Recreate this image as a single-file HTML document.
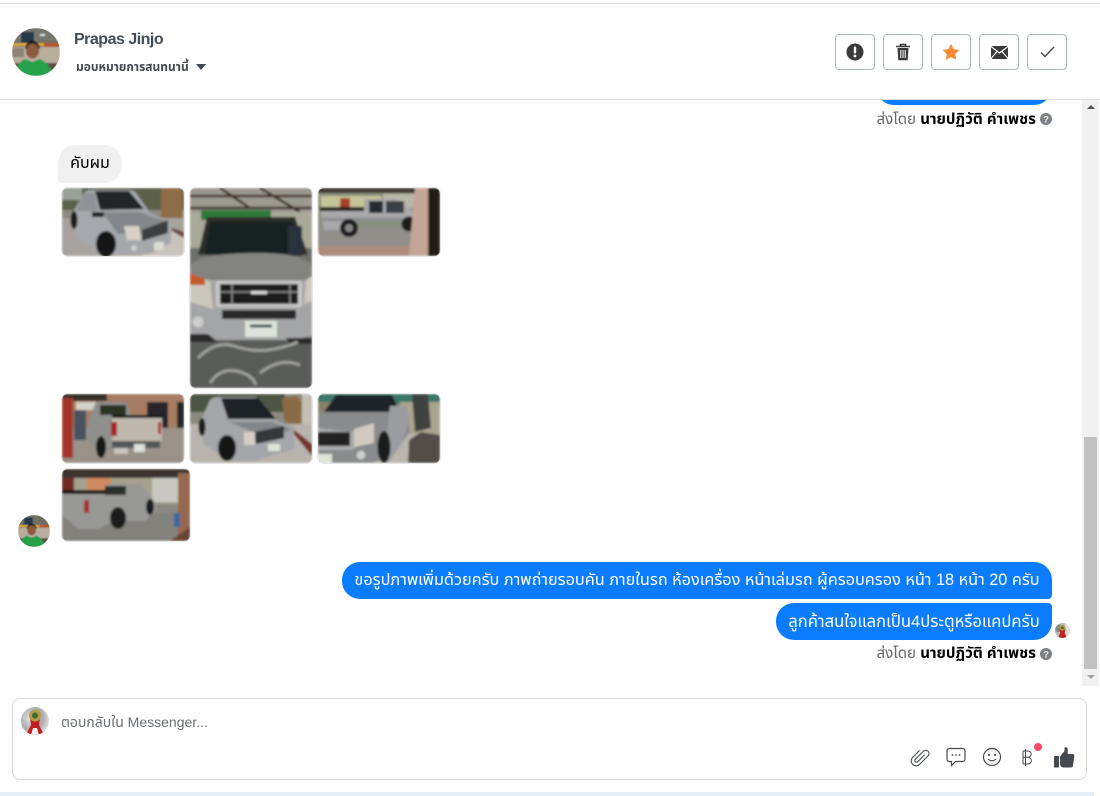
<!DOCTYPE html>
<html lang="th"><head><meta charset="utf-8"><title>Prapas Jinjo</title>
<style>
html,body{margin:0;padding:0;width:1100px;height:796px;overflow:hidden;background:#fff;font-family:"Liberation Sans","Noto Sans Thai","DejaVu Sans","Noto Sans CJK SC",sans-serif;color:#000}
.a{position:absolute}
.t{position:absolute;white-space:nowrap}
.btn{position:absolute;top:34px;width:38px;height:34px;border:1px solid #a9b4c0;border-radius:4px;background:#fff;display:flex;align-items:center;justify-content:center}
.img{position:absolute;border-radius:6px;overflow:hidden;box-shadow:0 0 0 1px #e4e4e4}
.img svg{display:block}
.bub{position:absolute;background:#0a7cff;color:#fff;line-height:37px;text-align:center;white-space:nowrap}
.sent{position:absolute;font-size:15.100px;color:#65676b;white-space:nowrap;text-align:right}
.sent b{color:#000}
</style></head>
<body>
<svg width="0" height="0" style="position:absolute"><defs>
<filter id="b" x="-5%" y="-5%" width="110%" height="110%"><feGaussianBlur stdDeviation="1"/></filter>
<filter id="s" x="-5%" y="-5%" width="110%" height="110%"><feGaussianBlur stdDeviation=".8"/></filter>
<clipPath id="c48"><circle cx="24" cy="24" r="24"/></clipPath>
<clipPath id="c28"><circle cx="14" cy="14" r="14"/></clipPath>
</defs></svg>

<div class="a" style="left:0;top:3px;width:1100px;height:1px;background:#dfdfdf"></div>
<div class="a" style="left:0;top:99px;width:1100px;height:1px;background:#dfdfdf"></div>

<svg class="a" style="left:12px;top:28px" width="48" height="48" viewBox="0 0 48 48"><g clip-path="url(#c48)"><g filter="url(#s)"><rect width="48" height="48" fill="#6f6d64"/><rect width="48" height="13" fill="#77766d"/><rect x="9" y="4" width="13" height="11" fill="#27384e"/><rect x="28" y="6" width="5" height="2" fill="#ddd"/><rect y="15" width="48" height="3" fill="#d7a640"/><rect x="32" y="15" width="16" height="4" fill="#b8552c"/><rect y="19" width="48" height="16" fill="#b9ad9d"/><rect y="20" x="0" width="12" height="9" fill="#8d8478"/><rect y="35" width="48" height="13" fill="#5f5145"/><path d="M14 17q6-9 13 0l1 4H13z" fill="#1b1b1b"/><ellipse cx="20.500" cy="23" rx="6.500" ry="7.500" fill="#8c5a3c"/><path d="M3 48q1-13 10-17l7 3 8-3q9 4 14 17z" fill="#27a04c"/></g></g></svg>
<div class="t" style="left:74px;top:30px;font-size:16px;letter-spacing:-.5px;font-weight:700;color:#444c56;line-height:20px">Prapas Jinjo</div>
<div class="t" style="left:76px;top:58px;font-size:12px;font-weight:700;color:#444950;line-height:18px">มอบหมายการสนทนานี้</div>
<div class="a" style="left:196px;top:64px;width:0;height:0;border-left:5.500px solid transparent;border-right:5.500px solid transparent;border-top:6px solid #444950"></div>

<div class="btn" style="left:835px"><svg width="18" height="18" viewBox="0 0 18 18"><circle cx="9" cy="9" r="8.500" fill="#3a3a3a"/><rect x="7.800" y="3.500" width="2.400" height="7" rx="1" fill="#fff"/><circle cx="9" cy="13" r="1.400" fill="#fff"/></svg></div>
<div class="btn" style="left:883px"><svg width="16" height="18" viewBox="0 0 16 18"><path d="M1 3.500h14M5.500 3V1.500h5V3" fill="none" stroke="#3a3a3a" stroke-width="1.600"/><path d="M2.500 5h11l-.8 12.200H3.300z" fill="#3a3a3a"/><path d="M5.800 7v8M8 7v8M10.200 7v8" stroke="#fff" stroke-width="1"/></svg></div>
<div class="btn" style="left:931px"><svg width="18" height="18" viewBox="0 0 18 18"><path d="M9 .8l2.600 5.300 5.800.8-4.200 4.100 1 5.800L9 14.100 3.800 16.800l1-5.800L.6 6.900l5.800-.8z" fill="#f98c34"/></svg></div>
<div class="btn" style="left:979px"><svg width="17" height="13" viewBox="0 0 17 13"><rect width="17" height="13" rx="1.500" fill="#3a3a3a"/><path d="M0 .5l8.500 6.500L17 .5M0 12.500l6-7M17 12.500l-6-7" fill="none" stroke="#fff" stroke-width="1.200"/></svg></div>
<div class="btn" style="left:1027px"><svg width="15" height="12" viewBox="0 0 15 12"><path d="M1 6.500l4 4L14 1" fill="none" stroke="#444" stroke-width="1.400"/></svg></div>

<div class="a" style="left:1082px;top:100px;width:17px;height:586px;background:#f1f1f1"></div>
<div class="a" style="left:1084px;top:437px;width:13px;height:232px;background:#c1c1c1"></div>
<div class="a" style="left:1087px;top:105px;width:0;height:0;border-left:4px solid transparent;border-right:4px solid transparent;border-bottom:4px solid #505050"></div>
<div class="a" style="left:1087px;top:675px;width:0;height:0;border-left:4px solid transparent;border-right:4px solid transparent;border-top:4px solid #a3a3a3"></div>

<div class="a" style="left:876px;top:100px;width:176px;height:5px;overflow:hidden"><div style="position:absolute;left:0;top:-37px;width:176px;height:42px;background:#0a7cff;border-radius:18px"></div></div>
<div class="sent" style="right:64px;top:111px;line-height:18px">ส่งโดย <b>นายปฏิวัติ คำเพชร</b></div>
<svg class="a" style="left:1040px;top:113px" width="12" height="12" viewBox="0 0 12 12"><circle cx="6" cy="6" r="6" fill="#7d8085"/><text x="6" y="9.500" font-size="9.500" font-weight="700" text-anchor="middle" fill="#fff" font-family="Liberation Sans">?</text></svg>

<div class="a" style="left:58px;top:145px;width:64px;height:38px;background:#f0f0f0;border-radius:18px 18px 18px 4px;font-size:16px;line-height:38px;text-align:center">คับผม</div>

<!-- photos -->
<div class="img" style="left:62px;top:188px;width:122px;height:68px"><svg width="122" height="68" viewBox="0 0 122 68"><g filter="url(#b)"><rect width="122" height="68" fill="#8a8a7e"/><rect width="122" height="22" fill="#5b604c"/><rect x="0" y="0" width="20" height="12" fill="#9aa296"/><rect x="99" y="0" width="21" height="36" fill="#8e6c45"/><rect y="30" width="122" height="38" fill="#a7a29b"/><path d="M88 34l34 12v22H80z" fill="#c8c3bb"/><path d="M98 36l24 14v-6z" fill="#6a4a48"/><path d="M11 24L22 5q2-3 8-3h36q6 0 8 3l14 20 22 10 -1 20-22 11H38L14 50z" fill="#a5a8ac"/><path d="M33 3h34l15 18-44 1z" fill="#202528"/><path d="M22 5l10 0 4 18H14z" fill="#8f9296"/><path d="M40 24h38l28 10-22 12H56z" fill="#83878b"/><path d="M80 42l26-10v13l-26 8z" fill="#3c3f42"/><path d="M62 38l15 0 2 14-14 0z" fill="#d6d2c6"/><path d="M55 52l28 2 24-8 1 6-18 13H56z" fill="#a5a7aa"/><circle cx="72" cy="60" r="3" fill="#cfcfcd"/><rect x="92" y="54" width="10" height="8" fill="#d9ddd2"/><ellipse cx="44" cy="56" rx="10" ry="13" fill="#171717"/><ellipse cx="12" cy="32" rx="3.500" ry="9" fill="#1f1f1f"/><rect x="30" y="24" width="12" height="5" fill="#1f2326"/></g></svg></div>

<div class="img" style="left:190px;top:188px;width:122px;height:200px"><svg width="122" height="200" viewBox="0 0 122 200"><g filter="url(#b)"><rect width="122" height="200" fill="#6e6f6c"/><rect width="122" height="24" fill="#9c9a90"/><path d="M0 8h122M0 20h122M30 0l30 20M70 0l40 24" stroke="#3f332a" stroke-width="2.500"/><rect y="24" width="122" height="36" fill="#a8a998"/><rect x="11" y="22" width="70" height="10" fill="#2f7a3a"/><path d="M17 29h88l13 38H8z" fill="#2e2e2c"/><path d="M20 34h82l9 32H15z" fill="#192124"/><rect x="98" y="38" width="14" height="30" fill="#293040"/><path d="M0 78q6-12 60-13t62 13v18H0z" fill="#83837f"/><path d="M0 92h122v56l-22 4H22L0 146z" fill="#a4a5a6"/><path d="M0 85l20 8 3 28-23-7z" fill="#cbc7bc"/><path d="M0 85l15 6v6H0z" fill="#c25a2a"/><path d="M122 88l-6 4-2 24 8-3z" fill="#cbc7bc"/><rect x="26" y="93" width="86" height="26" rx="2" fill="#c8c8c8"/><rect x="30" y="96" width="78" height="20" fill="#1e1e1e"/><path d="M30 104h78M42 96v20M100 96v20" stroke="#9a9a9a" stroke-width="1.200"/><rect x="61" y="103" width="16" height="3" fill="#ddd"/><rect x="32" y="122" width="74" height="9" fill="#2c2c2c"/><circle cx="8" cy="134" r="5.500" fill="#cfcfcd"/><rect x="55" y="133" width="32" height="16" fill="#dde3da"/><path d="M60 138h22" stroke="#345" stroke-width="3"/><rect y="152" width="122" height="48" fill="#5a5b5a"/><path d="M0 146h18l10 8H0zM96 150h26v6H100z" fill="#2c2c2a"/><path d="M8 170q18-18 36-12t34 4 30-8M20 195q10-15 26-12t20 14M70 185q20-16 40-8" fill="none" stroke="#9fa09c" stroke-width="3"/></g></svg></div>

<div class="img" style="left:318px;top:188px;width:122px;height:68px"><svg width="122" height="68" viewBox="0 0 122 68"><g filter="url(#b)"><rect width="122" height="68" fill="#8a9080"/><rect width="100" height="5" fill="#40372e"/><rect x="3" y="8" width="60" height="18" fill="#c4c698"/><rect x="22" y="10" width="10" height="14" fill="#a83f2a"/><rect x="65" y="6" width="35" height="14" fill="#b8b8a8"/><rect y="40" width="100" height="20" fill="#908f8a"/><rect y="58" width="106" height="10" fill="#ad8c7c"/><path d="M2 20h44V13q0-2 3-2h26q5 0 10 5l10 7 6 3 1 12-10 2-8-8H30l-6 10H6z" fill="#a9a9ab"/><rect x="2" y="19" width="44" height="4" fill="#1c1c1c"/><rect x="51" y="13" width="14" height="12" fill="#272b2e"/><rect x="68" y="13" width="18" height="12" fill="#3a4044"/><path d="M2 30h96v3H2z" fill="#8c8c8e"/><circle cx="31" cy="40" r="9" fill="#1c1c1c"/><circle cx="31" cy="40" r="4" fill="#888"/><circle cx="91" cy="36" r="7.500" fill="#1c1c1c"/><path d="M97 0h17l-4 68H91z" fill="#c4a696"/><rect x="110" width="12" height="68" fill="#201a15"/></g></svg></div>

<div class="img" style="left:62px;top:394px;width:122px;height:69px"><svg width="122" height="69" viewBox="0 0 122 69"><g filter="url(#b)"><rect width="122" height="69" fill="#9a9287"/><rect width="122" height="34" fill="#a67d62"/><rect width="45" height="7" fill="#35302b"/><rect x="14" y="8" width="22" height="8" fill="#d5d2c8"/><rect x="85" y="8" width="21" height="26" fill="#25272b"/><rect x="115" y="8" width="7" height="26" fill="#222528"/><rect x="0" y="4" width="11" height="60" fill="#a2362a"/><rect x="12" y="16" width="12" height="30" fill="#4a5360"/><path d="M34 8h30l6 14H52l-2 34H34L26 46V26z" fill="#8f8f8d"/><rect x="38" y="11" width="26" height="10" fill="#2a3324"/><path d="M50 24h50v23H50z" fill="#bfb9ad"/><rect x="50" y="21" width="50" height="3" fill="#181818"/><rect x="49" y="28" width="6" height="14" fill="#a52626"/><rect x="96" y="28" width="3" height="12" fill="#a52626"/><rect x="50" y="47" width="48" height="7" fill="#55575a"/><rect x="52" y="54" width="14" height="6" fill="#c9c5bb"/><rect x="72" y="50" width="11" height="8" fill="#dfe3dc"/><ellipse cx="39" cy="53" rx="5" ry="11" fill="#181818"/></g></svg></div>

<div class="img" style="left:190px;top:394px;width:122px;height:69px"><svg width="122" height="69" viewBox="0 0 122 69"><g filter="url(#b)"><rect width="122" height="69" fill="#8a8a7e"/><rect width="95" height="18" fill="#4e5544"/><path d="M92 4l14-2 6 6-2 30-16-12z" fill="#8a6a44"/><rect x="112" width="10" height="40" fill="#c3bfb3"/><rect y="30" width="122" height="39" fill="#b8b3ac"/><path d="M94 28l28 22v12z" fill="#74302f"/><path d="M10 28L20 6q2-3 8-3h38l22 24 16 6v22l-40 12H40L14 50z" fill="#a4a6a9"/><path d="M31 4h37l18 21H38z" fill="#1f2427"/><path d="M38 28h44l20 7-24 8z" fill="#82858a"/><path d="M64 38l30-6v12l-28 6z" fill="#35383b"/><path d="M54 38h11v13H54z" fill="#d4cfc5"/><rect x="78" y="50" width="12" height="7" fill="#dfe3d8"/><ellipse cx="37" cy="54" rx="9" ry="13" fill="#171717"/><ellipse cx="12" cy="33" rx="3.500" ry="9" fill="#1d1d1d"/></g></svg></div>

<div class="img" style="left:318px;top:394px;width:122px;height:69px"><svg width="122" height="69" viewBox="0 0 122 69"><g filter="url(#b)"><rect width="122" height="69" fill="#8f8e83"/><rect width="122" height="10" fill="#3c7868"/><rect y="8" width="20" height="20" fill="#87806a"/><rect x="82" y="8" width="40" height="34" fill="#aaa48f"/><rect y="40" width="122" height="29" fill="#bab5ad"/><path d="M18 1h56l8 17H6z" fill="#1c2226"/><path d="M0 18h70l20 8 2 12-18 24-20 7H0z" fill="#898b8c"/><path d="M0 34l34 4 22-8v14L34 56H0z" fill="#a9abac"/><path d="M0 38h32v14H0z" fill="#212223"/><path d="M36 35l20-6v20l-20 4z" fill="#d0cbc0"/><path d="M72 12h16l4 10-8 27-14 20-10-3 10-32z" fill="#9b9da0"/><circle cx="43" cy="61" r="4.500" fill="#ccc"/><ellipse cx="66" cy="53" rx="6.500" ry="16" fill="#1a1a1a"/><rect x="0" y="60" width="14" height="9" fill="#dfe3d8"/><path d="M94 0h16l3 34-16 4z" fill="#3f4340"/><path d="M91 46l12-8 19 3v28H90z" fill="#534d46"/></g></svg></div>

<div class="img" style="left:62px;top:469px;width:128px;height:72px"><svg width="128" height="72" viewBox="0 0 128 72"><g filter="url(#b)"><rect width="128" height="72" fill="#8b8880"/><rect width="128" height="9" fill="#3b362f"/><path d="M0 9h128v26H0z" fill="#a5a18e"/><rect y="9" width="12" height="22" fill="#6f2a24"/><rect x="25" y="9" width="24" height="18" fill="#cf8a5e"/><rect x="90" y="9" width="28" height="24" fill="#c8c8be"/><rect x="116" y="4" width="12" height="68" fill="#96684e"/><rect y="44" width="116" height="28" fill="#83817b"/><path d="M0 23h42l3-8h34l12 15 4 11-12 11H52l-16 8H16L0 46z" fill="#989896"/><rect x="43" y="17" width="21" height="9" fill="#292d2b"/><rect x="0" y="21" width="44" height="4" fill="#171717"/><rect x="22" y="31" width="5" height="13" fill="#a22f29"/><ellipse cx="56" cy="49" rx="8" ry="11" fill="#1a1a1a"/><ellipse cx="88" cy="38" rx="4" ry="8" fill="#1f1f1f"/><rect x="112" y="44" width="6" height="14" fill="#3a6aa0"/><path d="M108 72l20-14v14z" fill="#664431"/></g></svg></div>

<svg class="a" style="left:18px;top:515px" width="32" height="32" viewBox="0 0 48 48"><g clip-path="url(#c48)"><g filter="url(#s)"><rect width="48" height="48" fill="#6f6d64"/><rect x="9" y="4" width="13" height="11" fill="#27384e"/><rect y="15" width="48" height="3" fill="#d7a640"/><rect x="32" y="15" width="16" height="4" fill="#b8552c"/><rect y="19" width="48" height="16" fill="#b9ad9d"/><rect y="35" width="48" height="13" fill="#5f5145"/><path d="M14 17q6-9 13 0l1 4H13z" fill="#1b1b1b"/><ellipse cx="20.500" cy="23" rx="6.500" ry="7.500" fill="#8c5a3c"/><path d="M3 48q1-13 10-17l7 3 8-3q9 4 14 17z" fill="#27a04c"/></g></g></svg>

<div class="bub" style="left:342px;top:562px;width:710px;height:37px;border-radius:18px 18px 4px 18px;font-size:16.280px">ขอรูปภาพเพิ่มด้วยครับ ภาพถ่ายรอบคัน ภายในรถ ห้องเครื่อง หน้าเล่มรถ ผู้ครอบครอง หน้า 18 หน้า 20 ครับ</div>
<div class="bub" style="left:776px;top:603px;width:276px;height:37px;border-radius:18px 4px 18px 18px;font-size:16.600px">ลูกค้าสนใจแลกเป็น4ประตูหรือแคปครับ</div>

<svg class="a" style="left:1055px;top:623px" width="15" height="15" viewBox="0 0 28 28"><g clip-path="url(#c28)"><rect width="28" height="28" fill="#b9b9b9"/><circle cx="7" cy="10" r="7" fill="#888"/><rect x="18" y="2" width="10" height="24" fill="#dedede"/><path d="M8 11h12l-2 7 4 10H6l4-10z" fill="#c41f1f"/><circle cx="14" cy="9" r="5.500" fill="#b79a4c"/><circle cx="14" cy="9" r="2.500" fill="#3c6b2a"/></g></svg>
<div class="sent" style="right:64px;top:645px;line-height:18px">ส่งโดย <b>นายปฏิวัติ คำเพชร</b></div>
<svg class="a" style="left:1040px;top:648px" width="12" height="12" viewBox="0 0 12 12"><circle cx="6" cy="6" r="6" fill="#7d8085"/><text x="6" y="9.500" font-size="9.500" font-weight="700" text-anchor="middle" fill="#fff" font-family="Liberation Sans">?</text></svg>

<div class="a" style="left:12px;top:698px;width:1073px;height:80px;border:1px solid #d9d9d9;border-radius:8px"></div>
<svg class="a" style="left:21px;top:707px" width="28" height="28" viewBox="0 0 28 28"><defs><radialGradient id="sil" cx=".35" cy=".4" r=".75"><stop offset="0" stop-color="#e8e8e8"/><stop offset=".55" stop-color="#a9a9a9"/><stop offset="1" stop-color="#efefef"/></radialGradient></defs><g clip-path="url(#c28)"><rect width="28" height="28" fill="url(#sil)"/><path d="M9 11h10l-1 7 5 10H5l5-10z" fill="#c41f1f"/><path d="M12 21h4l2 7h-8z" fill="#f2f2f2"/><circle cx="14" cy="8.500" r="6" fill="#b79a4c"/><circle cx="14" cy="8.500" r="3" fill="#3c6b2a"/></g></svg>
<div class="t" style="left:61px;top:713px;font-size:14px;color:#6a6e75;line-height:18px">ตอบกลับใน Messenger...</div>

<svg class="a" style="left:910px;top:747px" width="20" height="20" viewBox="0 0 20 20"><g transform="rotate(45 10 10)"><path d="M11.700 5.500v9.500a1.700 1.700 0 0 1-3.400 0V3.500a3.300 3.300 0 0 1 6.600 0v12a4.900 4.900 0 0 1-9.800 0V6" fill="none" stroke="#444950" stroke-width="1.050" stroke-linecap="round"/></g></svg>
<svg class="a" style="left:946px;top:747px" width="20" height="20" viewBox="0 0 20 20"><path d="M3.500 1.500h13a2.500 2.500 0 0 1 2.500 2.500v8a2.500 2.500 0 0 1-2.500 2.500H9.500L5.500 18.500v-4h-2A2.500 2.500 0 0 1 1 12V4a2.500 2.500 0 0 1 2.500-2.500z" fill="none" stroke="#444950" stroke-width="1.200"/><circle cx="6.500" cy="8" r=".9" fill="#444950"/><circle cx="10" cy="8" r=".9" fill="#444950"/><circle cx="13.500" cy="8" r=".9" fill="#444950"/></svg>
<svg class="a" style="left:982px;top:747px" width="20" height="20" viewBox="0 0 20 20"><circle cx="10" cy="10" r="8.500" fill="none" stroke="#444950" stroke-width="1.200"/><circle cx="7" cy="8" r="1" fill="#444950"/><circle cx="13" cy="8" r="1" fill="#444950"/><path d="M5.800 12q4.200 3.400 8.400 0" fill="none" stroke="#444950" stroke-width="1.100"/></svg>
<svg class="a" style="left:1021px;top:749px" width="12" height="17" viewBox="0 0 12 17"><path d="M4.500 0v17M2 2h5a3 3 0 0 1 0 6.300H2M7 8.300a3.300 3.300 0 0 1 0 6.700H2M2 2v13" fill="none" stroke="#444950" stroke-width="1"/></svg>
<div class="a" style="left:1034px;top:743px;width:8px;height:8px;border-radius:50%;background:#fa4a64"></div>
<svg class="a" style="left:1053px;top:746px" width="22" height="22" viewBox="0 0 22 22"><rect x="1" y="10" width="5" height="11.500" fill="#444950" rx=".8"/><path d="M7 10.500L11.500 5V1.500c1.500-1 3.200 0 3.200 2V8H19.500c1.200 0 2 1 1.800 2.200l-1.300 9.500c-.2 1-1 1.800-2 1.800H10.500C8.500 21.500 7 20 7 18z" fill="#444950"/></svg>

<div class="a" style="left:0;top:792px;width:1094px;height:4px;background:#e3eff5"></div>
</body></html>
